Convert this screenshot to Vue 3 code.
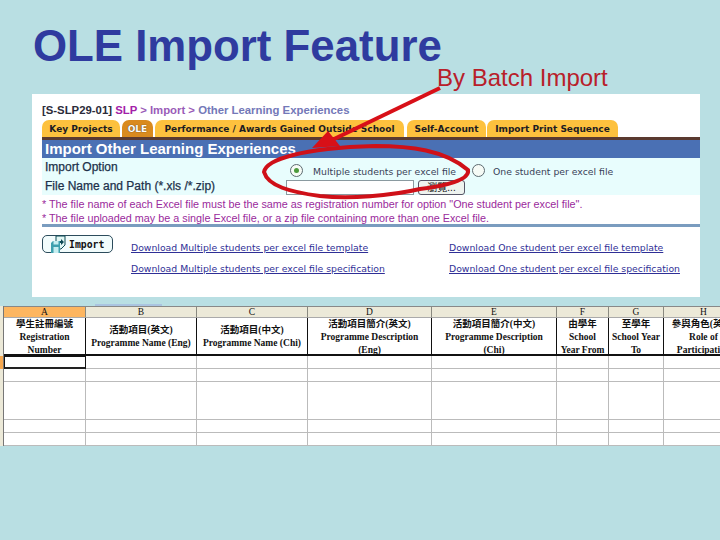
<script setup>
const columns = [
  { id: 'A', lines: ['學生註冊編號', 'Registration', 'Number'], active: true },
  { id: 'B', lines: ['活動項目(英文)', 'Programme Name (Eng)'] },
  { id: 'C', lines: ['活動項目(中文)', 'Programme Name (Chi)'] },
  { id: 'D', lines: ['活動項目簡介(英文)', 'Programme Description', '(Eng)'] },
  { id: 'E', lines: ['活動項目簡介(中文)', 'Programme Description', '(Chi)'] },
  { id: 'F', lines: ['由學年', 'School', 'Year From'] },
  { id: 'G', lines: ['至學年', 'School Year', 'To'] },
  { id: 'H', lines: ['參與角色(英文)', 'Role of', 'Participation'] }
]
const rows = ['r13', 'r13', 'r38', 'r13', 'r13']
const tabs = [
  { label: 'Key Projects', cls: 't1' },
  { label: 'OLE', cls: 't2 on' },
  { label: 'Performance / Awards Gained Outside School', cls: 't3' },
  { label: 'Self-Account', cls: 't4' },
  { label: 'Import Print Sequence', cls: 't5' }
]
</script>

<template>
  <div class="slide">
    <header class="head">
      <h1>OLE Import Feature</h1>
      <p class="batch">By Batch Import</p>
    </header>

    <section class="panel">
      <div class="crumb"><b>[S-SLP29-01]</b> <span class="slp">SLP</span> <span class="mid">&gt; Import &gt;</span> <span class="oth">Other Learning Experiences</span></div>
      <nav class="tabs">
        <span v-for="t in tabs" :key="t.label" class="tab" :class="t.cls">{{ t.label }}</span>
      </nav>
      <h2 class="bar">Import Other Learning Experiences</h2>
      <div class="form">
        <div class="frow">
          <span class="flabel">Import Option</span>
          <span class="radio sel"><i></i></span>
          <span class="ropt">Multiple students per excel file</span>
          <span class="radio r2"></span>
          <span class="ropt">One student per excel file</span>
        </div>
        <div class="frow f2">
          <span class="flabel">File Name and Path (*.xls /*.zip)</span>
          <span class="input"></span>
          <span class="browse">瀏覽...</span>
        </div>
      </div>
      <div class="notes">
        <p>* The file name of each Excel file must be the same as registration number for option "One student per excel file".</p>
        <p>* The file uploaded may be a single Excel file, or a zip file containing more than one Excel file.</p>
      </div>
      <div class="actions">
        <button class="imp">
          <svg width="16" height="18" viewBox="0 0 16 18">
            <path d="M6 1h9v9l-4 4H6z" fill="#e2f7f4" stroke="#0d4a55"/>
            <path d="M8 6h3V4l3 3-3 3V8H8z" fill="#0d4a55"/>
            <path d="M1 8l2-2h7v12H1z" fill="#3fa0ae"/>
            <path d="M3.5 6h5v3.5h-5zM3.5 12h5v6h-5z" fill="#c6eef0"/>
          </svg>
          <span>Import</span>
        </button>
        <div class="links">
          <a>Download Multiple students per excel file template</a>
          <a>Download One student per excel file template</a>
          <a>Download Multiple students per excel file specification</a>
          <a>Download One student per excel file specification</a>
        </div>
      </div>
    </section>

    <div class="tabmark"></div>
    <section class="sheet">
      <div class="rowhead c-top"></div>
      <div v-for="c in columns" :key="c.id" class="colhead" :class="{ active: c.active }">{{ c.id }}</div>
      <div class="rowhead h2"></div>
      <div v-for="c in columns" :key="c.id + 'h'" class="title">
        <span v-for="l in c.lines" :key="l">{{ l }}</span>
      </div>
      <template v-for="(r, i) in rows" :key="i">
        <div class="rowhead" :class="[r, { mark: i === 0 }]"></div>
        <div v-for="(c, j) in columns" :key="c.id" class="cell" :class="[r, { cur: i === 0 && j === 0 }]"></div>
      </template>
    </section>

    <svg class="marks" width="720" height="540" viewBox="0 0 720 540">
      <path d="M440 88 L332 140" stroke="#d81018" stroke-width="4" fill="none"/>
      <path d="M312 148 L328 131 L340 146 Z" fill="#d81018"/>
      <path d="M375 146 C410 146 445 150 468 170 C470 180 445 186 420 189 C390 196 350 199 320 196 C290 192 268 186 264 172 C266 160 300 148 375 146" fill="none" stroke="#cf1018" stroke-width="4"/>
    </svg>
  </div>
</template>

<style>
html, body { margin: 0; background: #b9dfe3; }
</style>

<style scoped>
.slide { position: relative; width: 720px; height: 540px; overflow: hidden; background: #b9dfe3; font-family: "Liberation Sans", Arial, sans-serif; }
.head { display: flex; height: 94px; padding-left: 33px; box-sizing: border-box; }
h1 { margin: 21px 0 0; font-size: 43.8px; line-height: 50px; font-weight: 700; color: #2f3b9f; white-space: nowrap; height: 50px; width: 404px; }
.batch { margin: 64px 0 0 0; font-size: 24px; line-height: 28px; color: #b8202a; white-space: nowrap; height: 28px; }

.panel { margin-left: 32px; width: 668px; height: 203px; background: #fff; box-sizing: border-box; padding-top: 10px; overflow: hidden; }
.crumb { margin-left: 10px; font-size: 11.35px; line-height: 13px; font-weight: 700; color: #222; white-space: nowrap; }
.crumb b { color: #2b2b3a; }
.slp { color: #a321a8; }
.mid { color: #9a5bb8; }
.oth { color: #7378b8; }
.tabs { display: flex; margin: 3px 0 0 10px; height: 17px; gap: 2px; align-items: stretch; }
.tab { display: flex; align-items: center; justify-content: center; box-sizing: border-box; background: #fdc13e; border-radius: 7px 7px 0 0; font-family: "DejaVu Sans", sans-serif; font-size: 9px; font-weight: 700; color: #1c1c22; white-space: nowrap; }
.tab.on { background: #d98a1e; color: #fff; text-shadow: 0 0 1px #222; }
.t1 { width: 78px; } .t2 { width: 31px; } .t3 { width: 249px; } .t4 { width: 79px; margin-left: 1px; } .t5 { width: 131px; margin-left: -1px; }
.bar { margin: 0 0 0 10px; border-top: 3px solid #5a3a30; height: 18px; background: #4a70b4; color: #fff; font-size: 15px; line-height: 18px; font-weight: 700; padding-left: 3px; white-space: nowrap; }
.form { margin-left: 10px; height: 37px; background: #e8fdfd; }
.frow { display: flex; align-items: center; height: 18px; font-size: 12px; color: #20304a; font-weight: 400; }
.frow.f2 { height: 19px; }
.flabel { width: 246px; padding-left: 3px; box-sizing: border-box; -webkit-text-stroke: .25px #20304a; white-space: nowrap; flex: none; }
.f2 .flabel { width: 244px; }
.radio { flex: none; width: 11px; height: 11px; border-radius: 50%; border: 1px solid #5c6a70; background: #f6fbf6; display: flex; align-items: center; justify-content: center; margin: 6px 10px 0 2px; }
.radio i { width: 5px; height: 5px; border-radius: 50%; background: #4c9a3c; }
.radio.r2 { margin-left: 8px; margin-right: 8px; }
.ropt { margin-top: 8px; font-family: "DejaVu Sans", sans-serif; font-size: 9.3px; color: #3a3f58; white-space: nowrap; width: 151px; flex: none; }
.ropt:last-child { width: auto; }
.input { width: 128px; height: 15px; background: #fff; border: 1px solid #8a9aa0; box-sizing: border-box; flex: none; margin-top: 3px; }
.browse { margin: 3px 0 0 4px; width: 47px; height: 15px; border: 1px solid #556; border-radius: 3px; background: #eef3ef; font-size: 10px; line-height: 13px; text-align: center; box-sizing: border-box; font-family: "Liberation Sans", "Noto Sans CJK TC", sans-serif; color: #111; flex: none; }
.notes { margin-left: 10px; height: 27px; border-bottom: 3px solid #7a9cbf; padding-top: 2px; }
.notes p { margin: 0; font-size: 10.8px; line-height: 14px; color: #9a2a9c; white-space: nowrap; }
.actions { display: flex; margin-left: 10px; padding-top: 8px; }
.imp { flex: none; display: flex; align-items: center; gap: 3px; width: 71px; height: 18px; padding: 0 0 0 7px; margin: 0; border: 1px solid #2c4c5c; border-radius: 5px; background: #f2fcfc; box-sizing: border-box; font-family: "DejaVu Sans Mono", monospace; font-size: 9.8px; font-weight: 700; color: #111; }
.links { display: grid; grid-template-columns: 318px auto; row-gap: 9px; margin: 7px 0 0 18px; justify-content: start; }
.links a { font-family: "DejaVu Sans", sans-serif; font-size: 9.3px; line-height: 12px; color: #2f2f96; text-decoration: underline; white-space: nowrap; }

.tabmark { width: 67px; height: 2px; margin: 7px 0 0 95px; background: #aac4e0; }
.sheet { display: grid; width: 720px; grid-template-columns: 4px 82px 111px 111px 124px 125px 52px 55px 80px; background: #fff; height: 140px; grid-template-rows: 12px 38px 13px 13px 38px 13px 13px; overflow: hidden; font-family: "Liberation Serif", "Noto Sans CJK TC", serif; color: #111; }
.rowhead { background: #ece9d8; border-right: 1px solid #777; box-sizing: border-box; }
.rowhead.mark { background: #f6a850; }
.colhead { background: #ece9d8; border-top: 1px solid #888; border-right: 1px solid #8a8a80; border-bottom: 1px solid #aaa; box-sizing: border-box; font-size: 9.5px; line-height: 11px; text-align: center; }
.colhead.active { background: #fdb660; }
.title { display: flex; flex-direction: column; justify-content: center; align-items: center; padding-top: 2px; border-right: 1px solid #111; border-bottom: 2px solid #111; box-sizing: border-box; font-size: 9.5px; line-height: 13px; font-weight: 700; white-space: nowrap; min-width: 0; }
.cell { border-right: 1px solid #bbb; border-bottom: 1px solid #bbb; box-sizing: border-box; }
.cur { border: 1px solid #111; border-bottom: 2px solid #222; }

.marks { position: absolute; left: 0; top: 0; pointer-events: none; }
</style>
